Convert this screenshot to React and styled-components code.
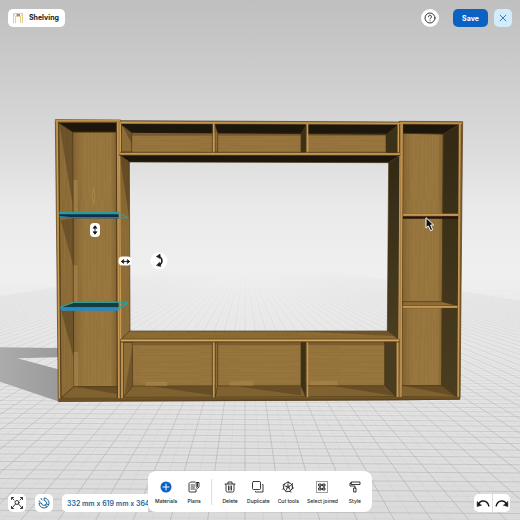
import React from 'react';
import styled, { createGlobalStyle, css } from 'styled-components';

const theme = {
  primary: '#0c62c2',
  measure: '#1c6597',
  ink: '#17181a',
  surface: '#fff',
  font: "Inter, 'Liberation Sans', sans-serif",
};

const wood = {
  edge: '#c69a55',
  edgeLine: '#4a3513',
  back: '#96743c',
  side: '#8c6c37',
  floor: '#806231',
  dark: '#3b3119',
  darker: '#1d160d',
};

const GlobalStyle = createGlobalStyle`
  * {
    box-sizing: border-box;
  }

  body {
    margin: 0;
    background: #dcdcdc;
    color: ${theme.ink};
    font-family: ${theme.font};
  }

  button {
    font-family: inherit;
    color: inherit;
  }
`;

const Page = styled.div`
  position: relative;
  min-height: 100vh;
  display: flex;
  flex-direction: column;
  justify-content: space-between;
  overflow: hidden;
`;

const Viewport = styled.main`
  position: absolute;
  inset: 0;
  display: grid;
  place-content: center;
  overflow: hidden;
`;

const Stage = styled.div`
  position: relative;
  width: max(100vw, 100vh);
  aspect-ratio: 1;

  > svg {
    display: block;
    width: 100%;
    height: 100%;
  }
`;

const surface = css`
  display: flex;
  align-items: center;
  justify-content: center;
  height: 18px;
  padding: 0;
  border: 0;
  border-radius: 5px;
  background: ${theme.surface};
`;

const Handle = styled.button`
  ${surface};
  position: absolute;
  left: ${props => props.$x}%;
  top: ${props => props.$y}%;
  width: ${props => props.$width}px;
  height: ${props => props.$height}px;
  border-radius: ${props => (props.$round ? '50%' : '4px')};
  transform: translate(-50%, -50%);
  cursor: grab;
`;

const Header = styled.header`
  position: relative;
  display: flex;
  justify-content: space-between;
  padding: 9px 8px 0;
`;

const Title = styled.h1`
  ${surface};
  gap: 5px;
  margin: 0;
  padding: 0 6px 0 4px;
  font-size: 7px;
  font-weight: 700;
  line-height: 12px;
`;

const HeaderActions = styled.div`
  display: flex;
  gap: 6px;
`;

const IconButton = styled.button`
  ${surface};
  flex: none;
  width: 18px;
  cursor: pointer;
`;

const HelpButton = styled(IconButton)`
  border-radius: 50%;
  margin-right: 8px;
`;

const SaveButton = styled(IconButton)`
  width: 35px;
  background: ${theme.primary};
  color: #fff;
  font-size: 7px;
  font-weight: 700;
`;

const CloseButton = styled(IconButton)`
  background: #d3ecfb;
  color: ${theme.measure};
`;

const Footer = styled.footer`
  position: relative;
  display: grid;
  grid-template-columns: minmax(0, 1fr) auto minmax(0, 1fr);
  align-items: end;
  padding: 8px;
`;

const ViewTools = styled.div`
  display: flex;
  gap: 9px;
  overflow: hidden;
  color: ${theme.measure};
`;

const FitButton = styled(IconButton)`
  color: ${theme.ink};
`;

const Dimensions = styled.output`
  ${surface};
  flex: none;
  padding: 0 5px;
  font-size: 7px;
  font-weight: 600;
  white-space: nowrap;
`;

const Toolbar = styled.nav`
  display: flex;
  gap: 8px;
  padding: 10px 8px 8px 7px;
  border-radius: 8px;
  background: ${theme.surface};
`;

const Tool = styled.button`
  display: flex;
  flex-direction: column;
  align-items: center;
  gap: 5px;
  min-width: 18px;
  padding: 0;
  border: 0;
  background: transparent;
  font-size: 5px;
  font-weight: 500;
  line-height: 6px;
  white-space: nowrap;
  cursor: pointer;
`;

const Divider = styled.span`
  width: 1px;
  margin: -2px 1px -1px 0;
  background: #dedede;
`;

const History = styled.div`
  justify-self: end;
  display: flex;
  border-radius: 5px;
  overflow: hidden;
  margin-right: 2px;

  ${IconButton} {
    border-radius: 0;
  }

  ${IconButton} + ${IconButton} {
    border-left: 1px solid #dcdcdc;
  }
`;

const Icon = ({ size = 12, width = 2, children }) => (
  <svg
    width={size}
    height={size}
    viewBox="0 0 24 24"
    fill="none"
    stroke="currentColor"
    strokeWidth={width}
    strokeLinecap="round"
    strokeLinejoin="round"
    aria-hidden="true"
  >
    {children}
  </svg>
);

const MaterialsIcon = () => (
  <Icon>
    <circle cx="12" cy="12" r="11" fill={theme.primary} stroke="none" />
    <path d="M12 6v12M6 12h12" stroke="#fff" />
  </Icon>
);

const PlansIcon = () => (
  <Icon width={1.7}>
    <path d="M14 2H5L2 5v15a2 2 0 0 0 2 2h12v-6M6 8h7M6 12h7M6 16h7" />
    <path d="M17 3h5v9l-3 3-2-3zM19 3v8" />
  </Icon>
);

const DeleteIcon = () => (
  <Icon width={1.7}>
    <path d="M2 6h20M8 5V2h8v3M4 7v12a3 3 0 0 0 3 3h10a3 3 0 0 0 3-3V7M9 10v8M12 10v8M15 10v8" />
  </Icon>
);

const DuplicateIcon = () => (
  <Icon width={1.7}>
    <rect x="1" y="1" width="16" height="16" rx="2" />
    <path d="M21 7h1v15H7v-1" />
  </Icon>
);

const CutIcon = () => (
  <Icon width={1.7}>
    <circle cx="12" cy="12" r="9" />
    <circle cx="12" cy="12" r="2" />
    <path d="M12 1l2 3M21 5l-1 4M23 14l-3 2M18 22l-3-1M9 22l-2-2M2 17l1-3M2 8l3-2M12 6v3M17 9l-3 2M16 17l-2-3M9 17l1-3M6 10l4 1" />
  </Icon>
);

const SelectJoinedIcon = () => (
  <Icon width={1.7}>
    <rect x="1" y="1" width="22" height="22" strokeDasharray="2 2" strokeLinecap="butt" />
    <path d="M10 8h4M10 16h4M8 10v4M16 10v4" />
    <rect x="6" y="6" width="4" height="4" />
    <rect x="14" y="6" width="4" height="4" />
    <rect x="6" y="14" width="4" height="4" />
    <rect x="14" y="14" width="4" height="4" />
  </Icon>
);

const StyleIcon = () => (
  <Icon width={1.7}>
    <path d="M5 2h17v5H5zM5 4H2v6h10v4M10 14h4v8h-4z" />
  </Icon>
);

const tools = [
  { label: 'Materials', icon: <MaterialsIcon /> },
  { label: 'Plans', icon: <PlansIcon />, last: true },
  { label: 'Delete', icon: <DeleteIcon /> },
  { label: 'Duplicate', icon: <DuplicateIcon /> },
  { label: 'Cut tools', icon: <CutIcon /> },
  { label: 'Select joined', icon: <SelectJoinedIcon /> },
  { label: 'Style', icon: <StyleIcon /> },
];

// Vanishing point of the floor, in scene units
const vp = { x: 735, y: 774 };

const FloorGrid = () => {
  const rays = [];
  for (let i = -90; i <= 90; i++) {
    rays.push(
      <line
        key={i}
        x1={vp.x}
        y1={vp.y}
        x2={vp.x + i * 56}
        y2="1560"
        opacity={i % 2 ? 0.2 : 0.9}
      />
    );
  }
  const rows = [];
  for (let d = 38; d < 360; d++) {
    const y = vp.y + 32000 / d;
    const far = Math.min(1, 70 / d) ** 2;
    rows.push(
      <line
        key={d}
        x1="0"
        y1={y - 5}
        x2="1560"
        y2={y + 5}
        opacity={(d % 2 ? 0.15 : 0.75) * far}
      />
    );
  }
  return (
    <g stroke="#acacac" strokeWidth="2" mask="url(#floorFade)">
      {rays}
      {rows}
    </g>
  );
};

const Face = ({ points, fill, grain }) => (
  <>
    <polygon points={points} fill={fill} stroke={wood.edgeLine} strokeWidth="2" />
    {grain && <polygon points={points} fill={`url(#${grain})`} />}
  </>
);

const SideUnits = () => (
  <g>
    <Face points="166,359 362,360 362,1203 175,1204" fill="#a27b40" />
    <Face points="218,396 349,396 352,1160 221,1160" fill="url(#backFade)" grain="grainV" />
    <Face points="176,368 218,396 221,1160 183,1195" fill={wood.side} grain="grainV" />
    <path d="M178 372L218 396V612zM182 660L220 655V798zM184 932H221V1075z" fill="#49351a" opacity=".45" />
    <path d="M221 540h12v95h-12zM221 796h12v110h-12zM221 1056h14v104h-14z" fill="#ae8850" opacity=".6" />
    <path d="M281 562q-9 25 0 52q9-27 0-52z" fill="none" stroke="#b18a51" strokeWidth="3" opacity=".7" />
    <Face points="175,368 349,368 349,396 218,396" fill={wood.darker} />
    <Face points="183,1195 221,1160 352,1160 352,1195" fill={wood.floor} />
    <path d="M230 1161H352V1182z" fill="#4b371b" opacity=".5" />
    <path d="M171 362L179 1200M353 364L356 1200" stroke={wood.edge} strokeWidth="4" />
    <path d="M166 362H362" stroke={wood.edge} strokeWidth="3" />
    <path d="M176 366L183 1198M349 366L352 1198" stroke={wood.edgeLine} strokeWidth="2" />

    <Face points="1198,364 1388,365 1380,1197 1196,1200" fill="#a27b40" />
    <Face points="1209,400 1330,402 1325,1157 1206,1157" fill="url(#backFade)" grain="grainV" />
    <Face points="1330,402 1376,375 1372,1192 1325,1157" fill="url(#darkSide)" />
    <Face points="1209,373 1376,374 1330,402 1209,400" fill={wood.darker} />
    <Face points="1206,1157 1325,1157 1372,1192 1203,1190" fill={wood.floor} />
    <path d="M1215 1158h110l42 31z" fill="#49361a" opacity=".45" />
    <path d="M1209 649H1375V656H1209z" fill="#24150e" />
    <path d="M1209 641H1375V648H1209z" fill="#cb9b57" stroke="#6d4a20" strokeWidth="1" />
    <Face points="1209,905 1327,905 1372,917 1208,917" fill={wood.side} />
    <path d="M1208 917H1373V924H1208z" fill="#cb9b57" stroke="#6d4a20" strokeWidth="1" />
    <path d="M1379 370L1374 1194M1206 370L1203 1196" stroke={wood.edge} strokeWidth="4" />
    <path d="M1385 368L1379 1195" stroke="#6d5024" strokeWidth="3" />
    <path d="M1200 369L1386 370" stroke={wood.edge} strokeWidth="3" />
  </g>
);

const TopRow = () => (
  <g>
    <Face points="362,362 1198,366 1198,466 362,466" fill={wood.back} />
    <path d="M395 398H1158V456H395z" fill={wood.back} />
    <path d="M395 398H1158V456H395z" fill="url(#grainH)" />
    <path d="M364 372L1192 374V404L364 398z" fill={wood.darker} />
    <path d="M395 398H1158V407H395z" fill="#4d3719" opacity=".4" />
    <Face points="364,374 395,398 395,456 364,456" fill={wood.side} />
    <path d="M366 376L395 398V430z" fill="#49351a" opacity=".5" />
    <Face points="645,374 653,400 653,456 645,456" fill={wood.side} />
    <Face points="903,402 918,376 918,456 903,456" fill={wood.dark} />
    <Face points="1158,404 1192,376 1192,458 1158,458" fill={wood.dark} />
    <Face points="388,486 1166,488 1200,466 360,466" fill={wood.darker} />
    <path d="M360 461L1200 463M641 370V458M922 372V458" stroke={wood.edge} strokeWidth="6" />
    <path d="M360 367L1200 370M361 370V460M1195 372V460" stroke={wood.edge} strokeWidth="4" />
    <path d="M360 457H1198M360 466H1200M637 374V456M918 376V456" stroke={wood.edgeLine} strokeWidth="2" />
  </g>
);

const WindowSides = () => (
  <g>
    <Face points="359,466 388,486 390,993 362,1018" fill="url(#jamb)" grain="grainV" />
    <path d="M360 468L388 486V660z" fill="#3c2a12" opacity=".4" />
    <Face points="1166,488 1200,466 1196,1018 1162,993" fill="url(#darkSide)" />
    <Face points="390,993 1162,993 1196,1018 362,1018" fill="#8a6932" grain="grainH" />
    <path d="M900 994H1162L1180 1008z" fill="#4b371b" opacity=".4" />
    <path d="M359 468L362 1018M1200 468L1197 1018" stroke={wood.edge} strokeWidth="4" />
  </g>
);

const BottomRow = () => (
  <g>
    <Face points="362,1018 1197,1018 1196,1200 362,1203" fill={wood.side} />
    <path d="M397 1027H1155V1158H397z" fill={wood.back} />
    <path d="M397 1027H1155V1158H397z" fill="url(#grainH)" />
    <path d="M397 1027H1155V1036H397z" fill="#4d3719" opacity=".35" />
    <Face points="370,1192 398,1158 1154,1157 1188,1190" fill={wood.floor} />
    <path d="M452 1159H636V1186zM710 1159H903V1186zM1000 1158H1150L1184 1188z" fill="#4b371b" opacity=".45" />
    <path d="M436 1146h66v12h-66zM690 1144h70v13h-70zM930 1143h83v13h-83z" fill="#b28b4e" opacity=".5" />
    <Face points="370,1027 397,1027 398,1158 370,1190" fill={wood.side} />
    <path d="M397 1040V1158L374 1180z" fill="#493518" opacity=".4" />
    <Face points="646,1027 653,1027 653,1158 646,1190" fill={wood.side} />
    <Face points="903,1027 917,1027 917,1190 903,1158" fill={wood.dark} />
    <Face points="1154,1027 1188,1027 1188,1190 1154,1157" fill="#4a3c20" />
    <path d="M366 1025V1194M641 1025V1192M922 1025V1192M1193 1025V1192" stroke={wood.edge} strokeWidth="5" />
    <path d="M362 1021H1197" stroke="#d5a660" strokeWidth="5" />
    <path d="M362 1026H1197M637 1027V1192M918 1027V1192" stroke={wood.edgeLine} strokeWidth="2" />
    <path d="M176 1199L1380 1194" stroke="#6a5025" strokeWidth="7" />
    <path d="M176 1204L1380 1198" stroke={wood.edgeLine} strokeWidth="2" />
  </g>
);

const SelectedShelves = () => (
  <g strokeLinejoin="round">
    <path d="M178 640H355L357 655H215L178 648z" fill="#102f4c" />
    <path d="M178 649L212 653H357" stroke="#2277b5" strokeWidth="4" fill="none" />
    <path d="M178 637H354L382 652L357 655" stroke="#28a5a7" strokeWidth="3" fill="none" />
    <path d="M178 640H355" stroke="#279b9d" strokeWidth="6" />
    <path d="M182 922L222 908H356V922z" fill="#123e40" />
    <path d="M180 922H356V932H184z" fill="#2789c3" />
    <path d="M180 922L222 907H382V912L356 927M356 922L382 908" stroke="#29a3a2" strokeWidth="3" fill="none" />
  </g>
);

const Scene = () => (
  <svg viewBox="0 0 1560 1560" role="img" aria-label="Shelving unit in 3D view">
    <defs>
      <linearGradient id="room" x2="0" y2="1">
        <stop offset="0" stopColor="#bfbfbf" />
        <stop offset=".13" stopColor="#cbcbcb" />
        <stop offset=".3" stopColor="#dddddd" />
        <stop offset=".4" stopColor="#eaeaea" />
        <stop offset=".52" stopColor="#efefef" />
        <stop offset=".68" stopColor="#ebebeb" />
        <stop offset=".85" stopColor="#e0e0e0" />
        <stop offset="1" stopColor="#dadada" />
      </linearGradient>
      <linearGradient id="fade" x2="0" y2="1">
        <stop offset=".52" stopColor="#000" />
        <stop offset=".68" stopColor="#888" />
        <stop offset=".9" stopColor="#fff" />
      </linearGradient>
      <mask id="floorFade" maskUnits="userSpaceOnUse" x="0" y="0" width="1560" height="1560">
        <rect width="1560" height="1560" fill="url(#fade)" />
      </mask>
      <linearGradient id="shadow">
        <stop offset="0" stopColor="#a2a2a2" />
        <stop offset="1" stopColor="#8e8e8e" />
      </linearGradient>
      <linearGradient id="backFade">
        <stop offset="0" stopColor="#836331" />
        <stop offset=".25" stopColor="#98763e" />
        <stop offset=".85" stopColor="#98763e" />
        <stop offset="1" stopColor="#80602f" />
      </linearGradient>
      <linearGradient id="darkSide" x2="0" y2="1">
        <stop offset="0" stopColor="#332914" />
        <stop offset="1" stopColor="#4a3d20" />
      </linearGradient>
      <linearGradient id="jamb" x2="0" y2="1">
        <stop offset="0" stopColor="#7d5f2f" />
        <stop offset=".4" stopColor="#8e6c36" />
        <stop offset="1" stopColor="#8e6e39" />
      </linearGradient>
      <pattern id="grainV" width="46" height="300" patternUnits="userSpaceOnUse">
        <path d="M6 0V180M14 60V300M23 0V120M31 90V300M40 0V240" stroke="#66491f" strokeWidth="2" opacity=".2" />
        <path d="M10 80V260M27 0V200M36 120V280" stroke="#b08950" strokeWidth="2" opacity=".25" />
      </pattern>
      <pattern id="grainH" width="300" height="34" patternUnits="userSpaceOnUse">
        <path d="M0 5H180M60 13H300M0 22H120M90 30H300" stroke="#66491f" strokeWidth="2" opacity=".2" />
        <path d="M80 9H260M0 18H200M120 26H280" stroke="#b08950" strokeWidth="2" opacity=".25" />
      </pattern>
    </defs>
    <rect width="1560" height="1560" fill="url(#room)" />
    <FloorGrid />
    <path
      d="M0 1042L174 1044V1072L52 1075L174 1108V1204L0 1145z"
      fill="url(#shadow)"
      opacity=".85"
    />
    <SideUnits />
    <TopRow />
    <WindowSides />
    <BottomRow />
    <SelectedShelves />
    <path
      d="M1278 653V684L1285 678L1292 692L1298 689L1292 675H1301z"
      fill="#111"
      stroke="#fff"
      strokeWidth="3"
    />
  </svg>
);

export default function App() {
  return (
    <Page>
      <GlobalStyle />
      <Viewport>
        <Stage>
          <Scene />
          <Handle $x={18.2} $y={44.2} $width={10} $height={14} aria-label="Move vertically">
            <Icon size={10}>
              <path d="M12 3v18M8 7l4-5 4 5zM8 17l4 5 4-5z" fill="currentColor" />
            </Icon>
          </Handle>
          <Handle $x={24.1} $y={50.2} $width={13} $height={9} aria-label="Move horizontally">
            <Icon size={10}>
              <path d="M3 12h18M7 8l-5 4 5 4zM17 8l5 4-5 4z" fill="currentColor" />
            </Icon>
          </Handle>
          <Handle $x={30.6} $y={50.1} $width={17} $height={17} $round aria-label="Rotate">
            <Icon size={14} width={2.5}>
              <path d="M11 5c7 3 7 12 0 15" />
              <path d="M7 5l6-4v7zM7 20l5-5 2 7z" fill="currentColor" strokeWidth="1" />
            </Icon>
          </Handle>
        </Stage>
      </Viewport>

      <Header>
        <Title>
          <svg width="12" height="12" viewBox="0 0 24 24" fill="none" aria-hidden="true">
            <path d="M3 22V3h18v19M7 22V9M17 22V9M3 4l4 5h10l4-5" stroke="#d9bd6c" strokeWidth="1.500" />
            <path d="M9 6h7" stroke="#222" strokeWidth="2" />
          </svg>
          Shelving
        </Title>
        <HeaderActions>
          <HelpButton aria-label="Help">
            <Icon width={1.7}>
              <circle cx="12" cy="12" r="10" />
              <path d="M9 9.500a3 3 0 1 1 4.500 2.500c-1 .6-1.500 1-1.500 2M12 17.500v.1" />
            </Icon>
          </HelpButton>
          <SaveButton>Save</SaveButton>
          <CloseButton aria-label="Close">
            <Icon size={10}>
              <path d="M5 5l14 14M19 5L5 19" />
            </Icon>
          </CloseButton>
        </HeaderActions>
      </Header>

      <Footer>
        <ViewTools>
          <FitButton aria-label="Fit to view">
            <Icon width={1.7}>
              <circle cx="12" cy="11" r="4" />
              <path d="M1 5V1h4M19 1h4v4M23 19v4h-4M5 23H1v-4M2 2l4 4M22 2l-4 4M2 22l7-8M22 22l-7-8" />
            </Icon>
          </FitButton>
          <IconButton aria-label="Snap">
            <Icon>
              <path d="M13 2a10 10 0 1 1-11 10h5a5 5 0 1 0 6-5z" />
              <path d="M2 8l2 1M6 3l2 3M17 20l-2-4M21 15l-4-1" />
            </Icon>
          </IconButton>
          <Dimensions>332 mm x 619 mm x 364 mm</Dimensions>
        </ViewTools>
        <Toolbar aria-label="Edit">
          {tools.map(tool => (
            <React.Fragment key={tool.label}>
              <Tool>
                {tool.icon}
                {tool.label}
              </Tool>
              {tool.last && <Divider />}
            </React.Fragment>
          ))}
        </Toolbar>
        <History>
          <IconButton aria-label="Undo">
            <Icon size={14} width={2.5}>
              <path d="M4 15c3-9 15-9 18 2" />
              <path d="M2 10v8l7-2z" fill="currentColor" strokeWidth="1" />
            </Icon>
          </IconButton>
          <IconButton aria-label="Redo">
            <Icon size={14} width={2.5}>
              <path d="M2 17c3-11 15-11 18-2" />
              <path d="M22 10v8l-7-2z" fill="currentColor" strokeWidth="1" />
            </Icon>
          </IconButton>
        </History>
      </Footer>
    </Page>
  );
}
